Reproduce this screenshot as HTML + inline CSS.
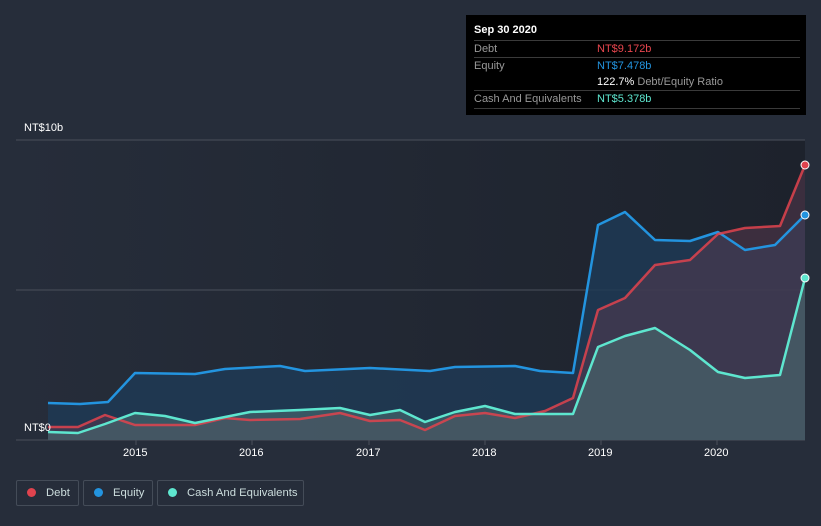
<!DOCTYPE html>
<html><head><style>
html,body{margin:0;width:821px;height:526px;overflow:hidden}
body{background:#262d3a;font-family:"Liberation Sans",sans-serif;position:relative}
.t{position:absolute;color:#fff;font-size:11px}
.tip{position:absolute;left:466px;top:15px;width:340px;height:100px;background:#000;font-size:11px}
.row{position:absolute;left:8px;right:6px;border-top:1px solid #3a3a3a;height:17px;color:#999}
.row span{position:absolute;left:123px;top:2px}
.lg{position:absolute;top:480px;height:26px;border:1px solid #444c58;border-radius:2px;color:#cdd;font-size:11.3px;line-height:24px;box-sizing:border-box;white-space:nowrap}
.lg i{display:inline-block;width:9px;height:9px;border-radius:50%;margin:0 10px 0 10px;vertical-align:-1px}
</style></head><body>
<svg width="821" height="526" style="position:absolute;left:0;top:0">
<defs><linearGradient id="bg" x1="0" x2="1"><stop offset="0" stop-color="#262d3a"/><stop offset="1" stop-color="#1d222c"/></linearGradient></defs>
<rect x="16" y="140" width="789" height="300" fill="url(#bg)"/>
<line x1="16" y1="140" x2="805" y2="140" stroke="#4a505b"/>
<line x1="16" y1="290" x2="805" y2="290" stroke="#4a505b"/>
<line x1="16" y1="440" x2="805" y2="440" stroke="#4a505b"/>
<polygon fill="#1f3a55" fill-opacity=".85" points="48,403 80,404 108,402 135,373 195,374 225,369 280,366 305,371 370,368 430,371 455,367 515,366 540,371 573,373 598,225 625,212 655,240 690,241 718,232 745,250 775,245 805,215 805,440 48,440"/>
<polygon fill="#5a3a50" fill-opacity=".5" points="48,427 78,427 105,415 135,425 195,425 225,418 250,420 300,419 340,413 370,421 400,420 425,430 455,416 485,413 515,418 545,411 573,398 598,310 625,298 655,265 690,260 718,234 745,228 780,226 805,165 805,440 48,440"/>
<polygon fill="#4a6a70" fill-opacity=".6" points="48,432 78,433 105,424 135,413 165,416 195,423 225,417 250,412 300,410 340,408 370,415 400,410 425,422 455,412 485,406 515,414 545,414 573,414 598,347 625,336 655,328 690,350 718,372 745,378 780,375 805,278 805,440 48,440"/>
<polyline fill="none" stroke="#2394df" stroke-width="2.5" stroke-linejoin="round" points="48,403 80,404 108,402 135,373 195,374 225,369 280,366 305,371 370,368 430,371 455,367 515,366 540,371 573,373 598,225 625,212 655,240 690,241 718,232 745,250 775,245 805,215"/>
<polyline fill="none" stroke="#e0434e" stroke-opacity=".85" stroke-width="2.5" stroke-linejoin="round" points="48,427 78,427 105,415 135,425 195,425 225,418 250,420 300,419 340,413 370,421 400,420 425,430 455,416 485,413 515,418 545,411 573,398 598,310 625,298 655,265 690,260 718,234 745,228 780,226 805,165"/>
<polyline fill="none" stroke="#5ee6cf" stroke-width="2.5" stroke-linejoin="round" points="48,432 78,433 105,424 135,413 165,416 195,423 225,417 250,412 300,410 340,408 370,415 400,410 425,422 455,412 485,406 515,414 545,414 573,414 598,347 625,336 655,328 690,350 718,372 745,378 780,375 805,278"/>
<circle cx="805" cy="165" r="4" fill="#e0434e" stroke="#fff" stroke-width="1"/>
<circle cx="805" cy="215" r="4" fill="#2394df" stroke="#fff" stroke-width="1"/>
<circle cx="805" cy="278" r="4" fill="#5ee6cf" stroke="#fff" stroke-width="1"/>
<g stroke="#4a505b"><line x1="136" y1="440" x2="136" y2="445"/><line x1="252" y1="440" x2="252" y2="445"/><line x1="369" y1="440" x2="369" y2="445"/><line x1="485" y1="440" x2="485" y2="445"/><line x1="601" y1="440" x2="601" y2="445"/><line x1="717" y1="440" x2="717" y2="445"/></g>
</svg>
<div class="t" style="left:24px;top:122px">NT$10b</div>
<div class="t" style="left:24px;top:422px">NT$0</div>
<div class="t" style="left:123px;top:447px">2015</div>
<div class="t" style="left:239px;top:447px">2016</div>
<div class="t" style="left:356px;top:447px">2017</div>
<div class="t" style="left:472px;top:447px">2018</div>
<div class="t" style="left:588px;top:447px">2019</div>
<div class="t" style="left:704px;top:447px">2020</div>
<div class="tip">
<div style="position:absolute;left:8px;top:9px;color:#fff;font-weight:bold">Sep 30 2020</div>
<div class="row" style="top:25px"><div style="padding-top:2px">Debt</div><span style="color:#e8464e">NT$9.172b</span></div>
<div class="row" style="top:42px"><div style="padding-top:2px">Equity</div><span style="color:#2394df">NT$7.478b</span></div>
<div class="row" style="top:59px;border-top:none"><span><b style="color:#fff;font-weight:normal">122.7%</b> Debt/Equity Ratio</span></div>
<div class="row" style="top:75px;border-bottom:1px solid #3a3a3a"><div style="padding-top:2px">Cash And Equivalents</div><span style="color:#5ee6cf">NT$5.378b</span></div>
</div>
<div class="lg" style="left:16px;width:63px"><i style="background:#e0434e"></i>Debt</div>
<div class="lg" style="left:83px;width:70px"><i style="background:#2394df"></i>Equity</div>
<div class="lg" style="left:157px;width:147px"><i style="background:#5ee6cf"></i>Cash And Equivalents</div>
</body></html>
